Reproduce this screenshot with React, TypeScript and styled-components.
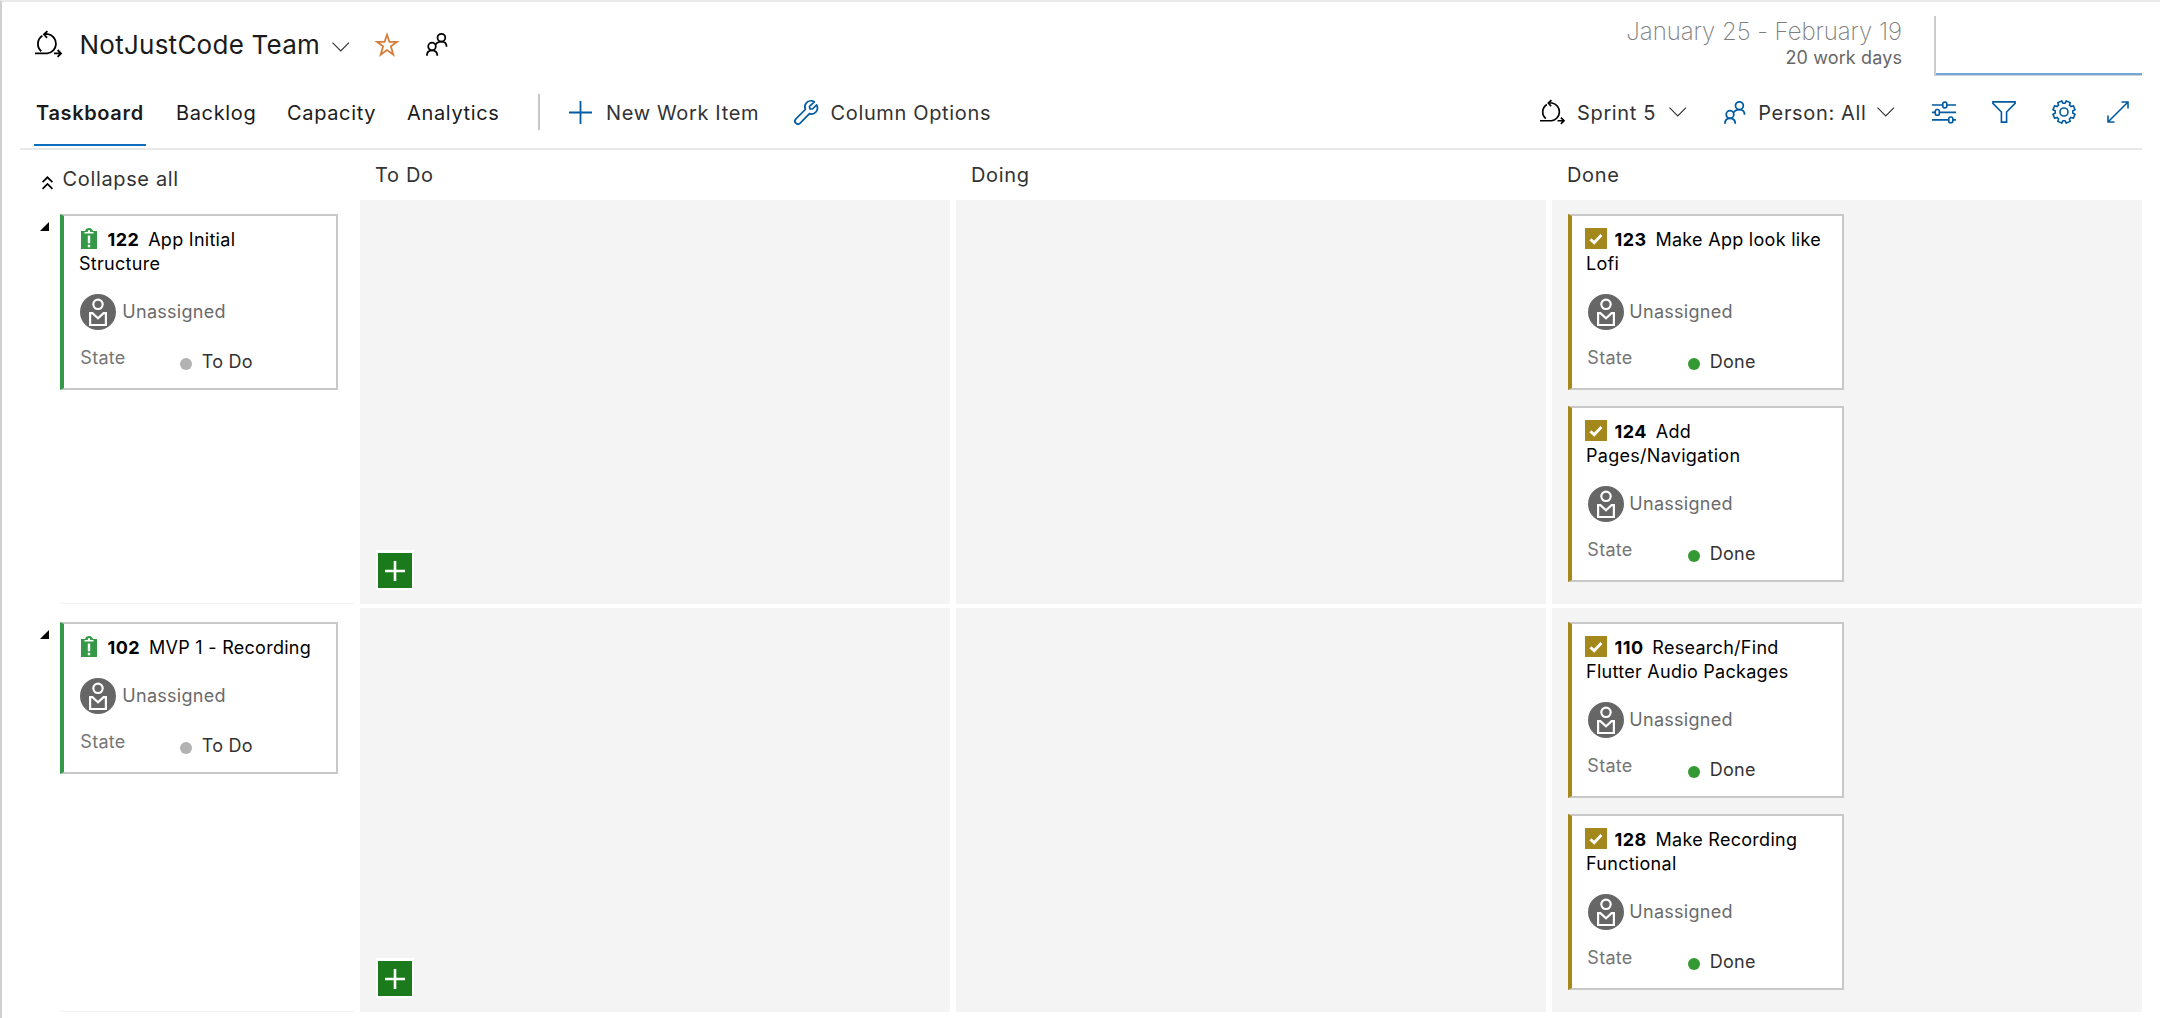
import React from 'react';
import styled, { createGlobalStyle } from 'styled-components';

const GlobalStyle = createGlobalStyle`
  *, *::before, *::after { box-sizing: border-box; }
  body { margin: 0; background: #fff; }
`;

const BLUE = '#005ba1';

const Page = styled.div`
  height: 1018px;
  padding-right: 18px;
  border-top: 2px solid #eaeaea;
  border-left: 2px solid #d0d0d0;
  overflow: hidden;
  background: #fff;
  color: #333;
  font: 400 20px/24px Inter, 'Liberation Sans', sans-serif;
  letter-spacing: 0.65px;
  white-space: nowrap;
`;

const Svg = styled.svg<{ $ml?: number }>`
  flex: none;
  display: block;
  overflow: visible;
  fill: none;
  margin-left: ${(p) => p.$ml ?? 0}px;
`;

/* ---------- header ---------- */

const Header = styled.header`
  display: flex;
  align-items: flex-start;
  height: 76px;
`;

const TeamPicker = styled.div`
  display: flex;
  align-items: center;
  height: 39px;
  margin-top: 23px;
  padding-left: 33px;
`;

const TeamName = styled.h1`
  width: 252px;
  margin: 0 0 0 18px;
  color: #1b1b1b;
  font-size: 26px;
  font-weight: 400;
  line-height: 39px;
  letter-spacing: 0.25px;
`;

const Dates = styled.div`
  margin-left: auto;
  padding-top: 16px;
  text-align: right;
`;

const DateRange = styled.div`
  color: #7d7d7d;
  font-size: 24px;
  font-weight: 200;
  line-height: 28px;
  letter-spacing: -0.05px;
`;

const WorkDays = styled.div`
  margin-top: 1px;
  color: #666;
  font-size: 18px;
  line-height: 22px;
  letter-spacing: 0.12px;
`;

const Burndown = styled.div`
  display: flex;
  align-items: flex-end;
  width: 208px;
  height: 60px;
  margin: 14px 0 0 32px;
  border-left: 2px solid #cdcdcd;
  border-bottom: 1px solid #d0d0d0;
`;

const BurndownTrend = styled.div`
  flex: 1;
  height: 2px;
  background: #72a9dd;
`;

/* ---------- toolbar ---------- */

const Toolbar = styled.nav`
  display: flex;
  align-items: center;
  height: 72px;
  margin-left: 18px;
  border-bottom: 2px solid #e8e8e8;
`;

const Tabs = styled.div`
  display: flex;
  align-self: flex-start;
  gap: 28px;
  margin-left: 14px;
`;

const Tab = styled.a<{ $w: number; $active?: boolean }>`
  width: ${(p) => p.$w}px;
  height: 68px;
  padding: 23px 2px 0;
  border-bottom: 2px solid ${(p) => (p.$active ? '#106ebe' : 'transparent')};
  color: #1b1b1b;
  font-weight: ${(p) => (p.$active ? 600 : 400)};
`;

const Divider = styled.span`
  width: 2px;
  height: 36px;
  margin: 0 29px 2px 31px;
  background: #c8c8c8;
`;

const Command = styled.div<{ $w: number; $gap: number }>`
  display: flex;
  align-items: center;
  gap: ${(p) => p.$gap}px;
  width: ${(p) => p.$w}px;

  svg {
    margin-bottom: 1px;
  }
`;

const Options = styled.div`
  display: flex;
  align-items: center;
  width: 602px;
  margin-left: auto;

  svg {
    margin-bottom: 2px;
  }
`;

const OptionLabel = styled.span<{ $w: number; $ml: number }>`
  width: ${(p) => p.$w}px;
  margin-left: ${(p) => p.$ml}px;
`;

/* ---------- board ---------- */

const BoardGrid = styled.div`
  display: grid;
  grid-template-columns: 352px 590px 590px 590px;
  column-gap: 6px;
`;

const HeadRow = styled(BoardGrid)`
  height: 50px;
`;

const CollapseAll = styled.div`
  display: flex;
  align-items: flex-start;
  gap: 9.5px;
  padding: 17px 0 0 40px;
`;

const ColumnTitle = styled.div`
  padding: 13px 0 0 15px;
`;

const BoardRow = styled(BoardGrid)`
  height: 404px;
  margin-bottom: 4px;
`;

const Parent = styled.div`
  display: flex;
  align-items: flex-start;
  padding-left: 38px;
`;

const ParentBody = styled.div`
  flex: 1;
  height: 404px;
  margin-left: 11px;
  padding-top: 14px;
  border-bottom: 1px solid #f0f0f0;
`;

const Cell = styled.div`
  display: flex;
  flex-direction: column;
  gap: 16px;
  padding: 14px 16px;
  background: #f4f4f4;
`;

const AddButton = styled.button`
  display: grid;
  place-items: center;
  width: 38px;
  height: 40px;
  margin: auto 0 0;
  padding: 0;
  border: solid #fff;
  border-width: 3px 2px 2px;
  background: #1b7a1b;
`;

type Kind = 'epic' | 'task';

const CardBox = styled.article<{ $kind: Kind }>`
  width: ${(p) => (p.$kind === 'epic' ? 278 : 276)}px;
  border: 2px solid #c8c8c8;
  border-left: 4px solid ${(p) => (p.$kind === 'epic' ? '#339947' : '#a4881c')};
  padding: 12px 16px 14px 14px;
  background: #fff;
  font-size: 18px;
  letter-spacing: 0.28px;
`;

const CardTitle = styled.div<{ $kind: Kind }>`
  padding-left: ${(p) => (p.$kind === 'epic' ? 1 : 0)}px;
  color: #000;
  white-space: normal;

  svg {
    display: inline-block;
    margin: -2px 0 0 -1px;
    vertical-align: -3px;
  }
`;

const CardId = styled.b`
  margin: 0 3.5px 0 7.5px;
  font-weight: 700;
  letter-spacing: 0.45px;
`;

const Assignee = styled.div<{ $kind: Kind }>`
  display: flex;
  gap: ${(p) => (p.$kind === 'epic' ? 6.3 : 5.3)}px;
  margin-top: 18px;
  padding-left: 2px;
  color: #6b6b6b;
  line-height: 35px;
`;

const StateRow = styled.div<{ $kind: Kind }>`
  display: flex;
  align-items: flex-start;
  margin-top: 16px;
  padding-left: ${(p) => (p.$kind === 'epic' ? 2.3 : 1.3)}px;
`;

const StateLabel = styled.span<{ $kind: Kind }>`
  width: ${(p) => (p.$kind === 'epic' ? 99.7 : 100.7)}px;
  color: #757575;
`;

const Dot = styled.span<{ $color: string }>`
  width: 12px;
  height: 12px;
  margin-top: 12px;
  border-radius: 50%;
  background: ${(p) => p.$color};
`;

const StateValue = styled.span`
  margin: 4px 0 0 9.7px;
  color: #333;
`;

/* ---------- icons ---------- */

const SprintIcon = ({ w = 26.5 }: { w?: number }) => (
  <Svg width={w} height={w} viewBox="0 0 26.5 26.5" stroke="#000" strokeWidth="1.8">
    <path d="M0 22.4H12.2A9.7 9.7 0 0 0 13 3.2Q11 2.9 9 3.4M12.4 .2L9 3.4L12 6.8" />
    <path d="M7.4 4.8A9.6 9.6 0 0 0 6.3 20.2M19 22.4H26M22.6 19L26 22.4L22.6 25.8" />
  </Svg>
);

const Chevron = ({ drop = 0 }: { drop?: number }) => (
  <Svg width="17.5" height="10" viewBox={`0 ${-drop} 17.5 10`} stroke="#333" strokeWidth="1.15">
    <path d="M.5 .7L8.75 9L17 .7" />
  </Svg>
);

const PeopleIcon = ({ color, ml }: { color: string; ml?: number }) => (
  <Svg $ml={ml} width="21.5" height="23" viewBox="0 0 21.5 23" stroke={color} strokeWidth="1.75">
    <circle cx="15.4" cy="4.7" r="3.9" />
    <circle cx="6" cy="13.5" r="3.8" />
    <path d="M.9 22.7C.9 19.2 3 17.3 6 17.3S11.3 19.2 11.3 22.7M9.4 11.8C10.6 9.6 12.7 8.6 15.4 8.6C18.5 8.6 20.6 10.6 20.6 13.8" />
  </Svg>
);

const StarIcon = () => (
  <Svg $ml={26} width="24" height="24" viewBox="0 0 24 24" stroke="#d67f3c" strokeWidth="1.8">
    <path d="M12 1.8L14.4 8.8H22L15.9 13.3L18.3 21.6L12 17L5.7 21.6L8.1 13.3L2 8.8H9.6Z" />
  </Svg>
);

const PlusIcon = () => (
  <Svg width="23" height="23" viewBox="0 0 23 23" stroke={BLUE} strokeWidth="1.8">
    <path d="M11.5 0V23M0 11.5H23" />
  </Svg>
);

const WrenchIcon = () => (
  <Svg width="24" height="25" viewBox="0 0 24 25" stroke={BLUE} strokeWidth="1.7" strokeLinejoin="round">
    <path d="M20.3 1.8C17.6 .3 14 .9 12.1 3.3C10.7 5.1 10.5 7.4 11.3 9.5L1.9 18.8C.6 20.1 .6 22 1.8 23.2C3 24.4 4.9 24.4 6.2 23.1L15.5 13.6C17.8 14.4 20.3 13.9 21.9 12C23.6 10 23.8 7.2 22.7 4.9L18.4 9L15.9 8.8L15.5 6.3Z" />
  </Svg>
);

const SlidersIcon = () => (
  <Svg $ml={37} width="24" height="23" viewBox="0 0 24 23" stroke={BLUE} strokeWidth="1.6">
    <path d="M0 4H10.8M14.8 4H24M0 11.4H3.3M7.3 11.4H24M0 18.9H16.8M20.8 18.9H24" />
    <rect x="10.8" y="1.1" width="4" height="5.8" rx="1.8" />
    <rect x="3.3" y="8.5" width="4" height="5.8" rx="1.8" />
    <rect x="16.8" y="16" width="4" height="5.8" rx="1.8" />
  </Svg>
);

const FilterIcon = () => (
  <Svg $ml={36} width="24" height="22" viewBox="0 0 24 22" stroke={BLUE} strokeWidth="1.6">
    <path d="M.9 .9H23.1V2.3L14.6 11V21.1H9.4V11L.9 2.3Z" />
  </Svg>
);

const GEAR_PATH = (() => {
  const points: string[] = [];
  for (let i = 0; i < 8; i += 1) {
    [[-0.26, 8.9], [-0.2, 11.3], [0.2, 11.3], [0.26, 8.9]].forEach(([offset, r]) => {
      const a = ((i + 0.5) * Math.PI) / 4 + offset;
      points.push(`${(12 + r * Math.cos(a)).toFixed(2)} ${(12 + r * Math.sin(a)).toFixed(2)}`);
    });
  }
  return `M${points.join('L')}Z`;
})();

const GearIcon = () => (
  <Svg $ml={36} width="24" height="24" viewBox="0 0 24 24" stroke={BLUE} strokeWidth="1.6" strokeLinejoin="round">
    <path d={GEAR_PATH} />
    <circle cx="12" cy="12" r="4" />
  </Svg>
);

const ExpandIcon = () => (
  <Svg $ml={31} width="22" height="22" viewBox="0 0 22 22" stroke={BLUE} strokeWidth="1.6">
    <path d="M1 21L21 1M14.5 1H21V7.5M1 14.5V21H7.5" />
  </Svg>
);

const CollapseIcon = styled(Svg)`
  margin-top: 9px;
`;

const Caret = styled.i`
  flex: none;
  width: 9px;
  height: 9px;
  margin-top: 22px;
  background: #000;
  clip-path: polygon(100% 0, 100% 100%, 0 100%);
`;

const EpicIcon = () => (
  <Svg width="22" height="21" viewBox="0 0 22 21">
    <path fill="#339947" d="M3 3H7C7.6 1 9 0 11 0S14.4 1 15 3H19V21H3Z" />
    <path fill="#fff" d="M10 2.6A1.1 1.1 0 0 1 12 2.6L12.3 4H15.5V5.6H6.5V4H9.7ZM9.8 7.6H12.2V15.2H9.8ZM9.8 16.8H12.2V19.2H9.8Z" />
  </Svg>
);

const TaskIcon = () => (
  <Svg width="22" height="21" viewBox="0 0 22 21">
    <rect width="22" height="21" fill="#a4881c" />
    <path stroke="#fff" strokeWidth="2.8" d="M5.4 11.2L9.2 14.8L16.4 7" />
  </Svg>
);

const AvatarIcon = () => (
  <Svg width="36" height="36" viewBox="0 0 36 36">
    <circle cx="18" cy="18" r="18" fill="#666" />
    <g stroke="#fff" strokeWidth="2.2">
      <circle cx="18" cy="10.3" r="4.7" />
      <path d="M10.1 19.2H12.4L18 24.2L23.6 19.2H25.9V31H10.1Z" />
    </g>
  </Svg>
);

/* ---------- data ---------- */

interface Item {
  id: number;
  title: string;
  state: 'To Do' | 'Done';
}

const rows: { parent: Item; done: Item[] }[] = [
  {
    parent: { id: 122, title: 'App Initial Structure', state: 'To Do' },
    done: [
      { id: 123, title: 'Make App look like Lofi', state: 'Done' },
      { id: 124, title: 'Add Pages/Navigation', state: 'Done' },
    ],
  },
  {
    parent: { id: 102, title: 'MVP 1 - Recording', state: 'To Do' },
    done: [
      { id: 110, title: 'Research/Find Flutter Audio Packages', state: 'Done' },
      { id: 128, title: 'Make Recording Functional', state: 'Done' },
    ],
  },
];

const Card = ({ item, kind }: { item: Item; kind: Kind }) => (
  <CardBox $kind={kind}>
    <CardTitle $kind={kind}>
      {kind === 'epic' ? <EpicIcon /> : <TaskIcon />}
      <CardId>{item.id}</CardId> {item.title}
    </CardTitle>
    <Assignee $kind={kind}>
      <AvatarIcon />
      <span>Unassigned</span>
    </Assignee>
    <StateRow $kind={kind}>
      <StateLabel $kind={kind}>State</StateLabel>
      <Dot $color={item.state === 'Done' ? '#339933' : '#b2b2b2'} />
      <StateValue>{item.state}</StateValue>
    </StateRow>
  </CardBox>
);

export default function App() {
  return (
    <Page>
      <GlobalStyle />
      <Header>
        <TeamPicker>
          <SprintIcon />
          <TeamName>NotJustCode Team</TeamName>
          <Chevron drop={2} />
          <StarIcon />
          <PeopleIcon color="#000" ml={27} />
        </TeamPicker>
        <Dates>
          <DateRange>January 25 - February 19</DateRange>
          <WorkDays>20 work days</WorkDays>
        </Dates>
        <Burndown>
          <BurndownTrend />
        </Burndown>
      </Header>

      <Toolbar>
        <Tabs>
          <Tab $w={112} $active>Taskboard</Tab>
          <Tab $w={83}>Backlog</Tab>
          <Tab $w={92}>Capacity</Tab>
          <Tab $w={102}>Analytics</Tab>
        </Tabs>
        <Divider />
        <Command $w={225} $gap={14}>
          <PlusIcon />
          <span>New Work Item</span>
        </Command>
        <Command $w={200} $gap={12.5}>
          <WrenchIcon />
          <span>Column Options</span>
        </Command>
        <Options>
          <SprintIcon w={24.5} />
          <OptionLabel $w={91.5} $ml={12.5}>Sprint 5</OptionLabel>
          <Chevron />
          <PeopleIcon color={BLUE} ml={37.5} />
          <OptionLabel $w={119} $ml={13.3}>Person: All</OptionLabel>
          <Chevron />
          <SlidersIcon />
          <FilterIcon />
          <GearIcon />
          <ExpandIcon />
        </Options>
      </Toolbar>

      <HeadRow>
        <CollapseAll>
          <CollapseIcon width="11" height="14" viewBox="0 0 11 14" stroke="#000" strokeWidth="1.7">
            <path d="M.6 6.2L5.5 1.3L10.4 6.2M.6 12.9L5.5 8L10.4 12.9" />
          </CollapseIcon>
          <span>Collapse all</span>
        </CollapseAll>
        <ColumnTitle>To Do</ColumnTitle>
        <ColumnTitle>Doing</ColumnTitle>
        <ColumnTitle>Done</ColumnTitle>
      </HeadRow>
      {rows.map((row) => (
        <BoardRow key={row.parent.id}>
          <Parent>
            <Caret />
            <ParentBody>
              <Card item={row.parent} kind="epic" />
            </ParentBody>
          </Parent>
          <Cell>
            <AddButton aria-label="Add task">
              <Svg width="20" height="20" viewBox="0 0 20 20" stroke="#fff" strokeWidth="2.6">
                <path d="M10 0V20M0 10H20" />
              </Svg>
            </AddButton>
          </Cell>
          <Cell />
          <Cell>
            {row.done.map((item) => (
              <Card key={item.id} item={item} kind="task" />
            ))}
          </Cell>
        </BoardRow>
      ))}
    </Page>
  );
}
